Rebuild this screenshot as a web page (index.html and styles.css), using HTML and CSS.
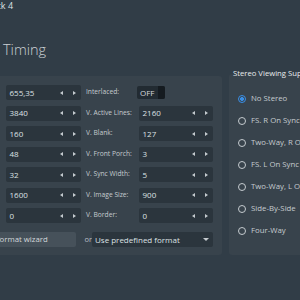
FILE: index.html
```html
<!DOCTYPE html>
<html lang="en">
  <head>
    <meta charset="UTF-8">
    <title>Timing</title>
    <link rel="stylesheet" href="styles.css">
  </head>
  <body>

    <div class="crumb">Block 4</div>
    <h1>Timing</h1>

    <div class="panels">
      <section class="timing">
        <div class="grid">
          <div class="spin"><span>655,35</span><i class="arr l"></i><i class="arr r"></i></div>
          <label>Interlaced:</label>
          <div class="toggle"><span>OFF</span><i></i></div>

          <div class="spin"><span>3840</span><i class="arr l"></i><i class="arr r"></i></div>
          <label>V. Active Lines:</label>
          <div class="spin"><span>2160</span><i class="arr l"></i><i class="arr r"></i></div>

          <div class="spin"><span>160</span><i class="arr l"></i><i class="arr r"></i></div>
          <label>V. Blank:</label>
          <div class="spin"><span>127</span><i class="arr l"></i><i class="arr r"></i></div>

          <div class="spin"><span>48</span><i class="arr l"></i><i class="arr r"></i></div>
          <label>V. Front Porch:</label>
          <div class="spin"><span>3</span><i class="arr l"></i><i class="arr r"></i></div>

          <div class="spin"><span>32</span><i class="arr l"></i><i class="arr r"></i></div>
          <label>V. Sync Width:</label>
          <div class="spin"><span>5</span><i class="arr l"></i><i class="arr r"></i></div>

          <div class="spin"><span>1600</span><i class="arr l"></i><i class="arr r"></i></div>
          <label>V. Image Size:</label>
          <div class="spin"><span>900</span><i class="arr l"></i><i class="arr r"></i></div>

          <div class="spin"><span>0</span><i class="arr l"></i><i class="arr r"></i></div>
          <label>V. Border:</label>
          <div class="spin"><span>0</span><i class="arr l"></i><i class="arr r"></i></div>
        </div>

        <div class="actions">
          <button class="wizard">Use format wizard</button>
          <span class="or">or</span>
          <div class="select"><span>Use predefined format</span><i class="caret"></i></div>
        </div>
      </section>

      <fieldset class="stereo">
        <legend>Stereo Viewing Support</legend>
        <div class="radio on"><i></i>No Stereo</div>
        <div class="radio"><i></i>FS. R On Sync High</div>
        <div class="radio"><i></i>Two-Way, R On Left</div>
        <div class="radio"><i></i>FS. L On Sync High</div>
        <div class="radio"><i></i>Two-Way, L On Left</div>
        <div class="radio"><i></i>Side-By-Side</div>
        <div class="radio"><i></i>Four-Way</div>
      </fieldset>
    </div>

  </body>
</html>
```

FILE: styles.css
```css
:root {
  --clr-bg:     #313d47;
  --clr-panel:  #38434c;
  --clr-field:  #2b353d;
  --clr-button: #46515a;
  --clr-text:   #dde1e4;
  --clr-label:  #c5cbcf;
  --clr-blue:   #3a8fe6;
}

html, body {
  margin: 0;
  padding: 0;
  overflow: hidden;
  width: 300px;
  height: 300px;
}

*, *::before, *::after {
  box-sizing: border-box;
}

body {
  background-color: var(--clr-bg);
  color: var(--clr-text);
  font: normal 8px/1 "Open Sans", sans-serif;
}

.crumb {
  margin: 0 0 0 -17px;
  padding-top: 1px;
  height: 12px;
  font-size: 9px;
  white-space: nowrap;
}

h1 {
  margin: 31px 0 0 3px;
  height: 33px;
  font-size: 14.5px;
  font-weight: 300;
  color: #ccd1d5;
}

.panels {
  display: flex;
  align-items: stretch;
  gap: 7px;
}

/* Timing block
 *
 */

.timing {
  flex: none;
  width: 226px;
  margin-left: -4px;
  padding: 9px 9px 8px 10px;
  border-radius: 3px;
  background-color: var(--clr-panel);
}

.grid {
  display: grid;
  grid-template-columns: 75px 48px 74px;
  grid-auto-rows: 15px;
  gap: 5.5px 5px;
  align-items: center;
}

.grid label {
  color: var(--clr-label);
  font-size: 6.7px;
  white-space: nowrap;
}

.spin {
  display: flex;
  align-items: center;
  height: 15px;
  padding: 0 5px 0 3.5px;
  border-radius: 2px;
  background-color: var(--clr-field);
}

.spin span {
  flex: 1;
}

.arr {
  width: 0;
  height: 0;
  border-top: 2.5px solid transparent;
  border-bottom: 2.5px solid transparent;
}
.arr.l { border-right: 3px solid var(--clr-label); margin-right: 10px; }
.arr.r { border-left: 3px solid var(--clr-label); }

.toggle {
  display: flex;
  width: 28px;
  height: 13px;
  margin-left: -2px;
  border-radius: 2px;
  overflow: hidden;
  background-color: #222b32;
}
.toggle span {
  flex: 1;
  padding: 2.5px 0 0 3px;
  color: #d5d9dc;
}
.toggle i {
  width: 7px;
  background-color: #151b20;
}

.actions {
  display: flex;
  justify-content: flex-end;
  align-items: center;
  margin-top: 9px;
}

.wizard {
  flex: none;
  width: 117px;
  height: 15px;
  padding: 0 7px 0 0;
  border: 0;
  border-radius: 2px;
  background-color: var(--clr-button);
  color: #d3d8db;
  font: inherit;
  font-size: 7.8px;
}

.or {
  width: 19px;
  padding-left: 8px;
  color: #b8bfc4;
  font-size: 7.5px;
}

.select {
  flex: none;
  display: flex;
  align-items: center;
  width: 121px;
  height: 15px;
  padding: 0 4px 0 3px;
  border-radius: 2px;
  background-color: var(--clr-field);
}
.select span {
  flex: 1;
}
.caret {
  width: 0;
  height: 0;
  border-left: 3px solid transparent;
  border-right: 3px solid transparent;
  border-top: 3px solid var(--clr-label);
}

/* Stereo block
 *
 */

.stereo {
  flex: none;
  width: 120px;
  margin: -6px 0 0;
  padding: 10px 0 0 9px;
  border: 0;
  border-radius: 3px;
  background-color: var(--clr-panel);
}

.stereo legend {
  padding: 0 0 0 4px;
  margin-left: -9px;
  font-size: 7.7px;
  color: #e8ebed;
  white-space: nowrap;
}

.radio {
  display: flex;
  align-items: center;
  gap: 5px;
  height: 22px;
  font-size: 7.8px;
  color: var(--clr-label);
  white-space: nowrap;
}

.radio i {
  flex: none;
  width: 8px;
  height: 8px;
  border: 1px solid var(--clr-label);
  border-radius: 50%;
}

.radio.on i {
  border-color: var(--clr-blue);
  background: radial-gradient(circle, var(--clr-blue) 0 1.8px, transparent 2.2px);
}
```
